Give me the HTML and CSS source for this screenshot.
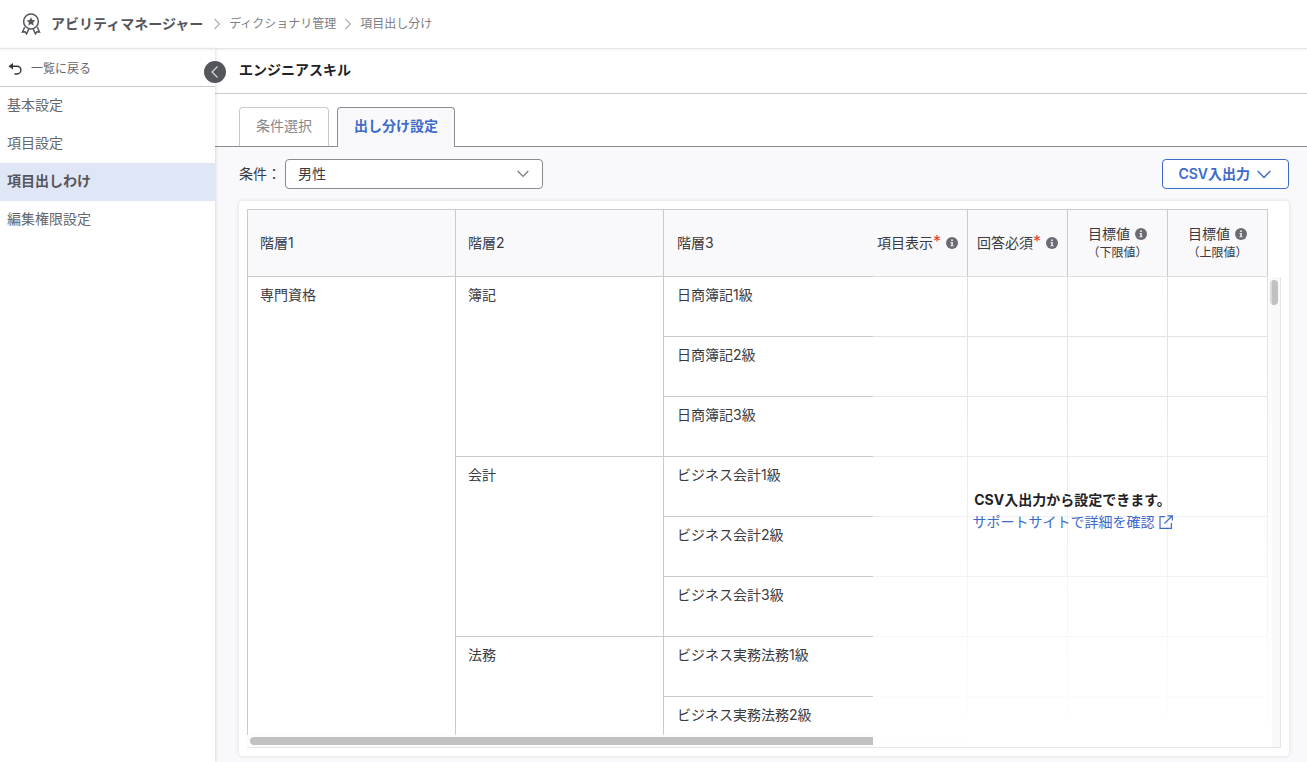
FILE: index.html
```html
<!DOCTYPE html>
<html lang="ja">
<head>
    <meta charset="UTF-8" />
    <meta name="viewport" content="width=device-width, initial-scale=1.0" />
    <title>項目出し分け | アビリティマネージャー</title>
    <link rel="stylesheet" href="styles.css">
</head>
<body>
    <svg class="sprite" aria-hidden="true">
        <symbol id="icon-info" viewBox="0 0 12 12">
            <circle cx="6" cy="6" r="6" fill="#6b6b73" />
            <path d="M5.1 2.4h1.8v1.5H5.1zM4.4 4.9h2.5v3.5h.8v.9H4.3v-.9h.9V5.8h-.8z" fill="#e8e8ea" />
        </symbol>
        <symbol id="icon-right" viewBox="0 0 8 12">
            <path d="M1.5 1l5 5-5 5" fill="none" stroke="#b0b0b4" stroke-width="1.2" />
        </symbol>
    </svg>

    <header class="header">
        <svg class="logo" width="20" height="22" viewBox="0 0 20 22" fill="none" stroke="#55555c" stroke-width="1.5">
            <circle cx="10" cy="8.5" r="7.4" />
            <path d="M10 4.3l1.3 2.7 3 .4-2.2 2.1.5 3L10 11.1l-2.6 1.4.5-3-2.2-2.1 3-.4z" fill="#55555c" stroke="none" />
            <path d="M3.6 14.2L1.5 19l2.6-.3 1.5 2.1 2.2-4.8M16.4 14.2l2.1 4.8-2.6-.3-1.5 2.1-2.2-4.8" />
        </svg>
        <nav class="breadcrumb">
            <a href="#" class="app-name">アビリティマネージャー</a>
            <svg width="8" height="12"><use href="#icon-right" /></svg>
            <a href="#">ディクショナリ管理</a>
            <svg width="8" height="12"><use href="#icon-right" /></svg>
            <span>項目出し分け</span>
        </nav>
    </header>

    <div class="layout">
        <aside class="sidebar">
            <a href="#" class="back">
                <svg width="14" height="14" viewBox="0 0 14 14">
                    <path d="M3 4.2h6a3.9 3.9 0 0 1 0 7.8H6.5" fill="none" stroke="#333338" stroke-width="1.4" />
                    <path d="M0.5 4.2L5 1v6.4z" fill="#333338" />
                </svg>
                一覧に戻る
            </a>
            <nav class="menu">
                <a href="#">基本設定</a>
                <a href="#">項目設定</a>
                <a href="#" class="active">項目出しわけ</a>
                <a href="#">編集権限設定</a>
            </nav>
            <button class="collapse" aria-label="メニューを閉じる">
                <svg width="22" height="22" viewBox="0 0 22 22">
                    <path d="M13.5 5.5L8 11l5.5 5.5" fill="none" stroke="#d8d8dc" stroke-width="1.2" />
                </svg>
            </button>
        </aside>

        <main class="main">
            <h1>エンジニアスキル</h1>
            <div class="tabs">
                <button class="tab">条件選択</button>
                <button class="tab active">出し分け設定</button>
            </div>

            <div class="toolbar">
                <label for="condition">条件：</label>
                <div class="select">
                    <select id="condition">
                        <option>男性</option>
                        <option>女性</option>
                    </select>
                    <svg width="12" height="8" viewBox="0 0 12 8">
                        <path d="M.7 1L6 6.5 11.3 1" fill="none" stroke="#77777d" stroke-width="1.2" />
                    </svg>
                </div>
                <button class="csv">
                    CSV入出力
                    <svg width="14" height="9" viewBox="0 0 14 9">
                        <path d="M.7 1L7 7.5 13.3 1" fill="none" stroke="#3c6acb" stroke-width="1.4" />
                    </svg>
                </button>
            </div>

            <div class="card">
                <div class="grid">
                    <div class="table-view">
                        <table>
                            <colgroup>
                                <col class="level">
                                <col class="level">
                                <col>
                                <col class="flag">
                                <col class="flag">
                                <col class="flag">
                                <col class="flag">
                            </colgroup>
                            <thead>
                                <tr>
                                    <th>階層1</th>
                                    <th>階層2</th>
                                    <th class="open">階層3</th>
                                    <th class="center"><div class="th-label">項目表示<span class="required">*</span><svg width="12" height="12"><use href="#icon-info" /></svg></div></th>
                                    <th class="center"><div class="th-label">回答必須<span class="required">*</span><svg width="12" height="12"><use href="#icon-info" /></svg></div></th>
                                    <th class="center"><div class="th-label">目標値<svg width="12" height="12"><use href="#icon-info" /></svg></div><small>（下限値）</small></th>
                                    <th class="center"><div class="th-label">目標値<svg width="12" height="12"><use href="#icon-info" /></svg></div><small>（上限値）</small></th>
                                </tr>
                            </thead>
                            <tbody>
                                <tr>
                                    <td rowspan="9">専門資格</td>
                                    <td rowspan="3">簿記</td>
                                    <td class="open">日商簿記1級</td>
                                    <td></td><td></td><td></td><td></td>
                                </tr>
                                <tr>
                                    <td class="open">日商簿記2級</td>
                                    <td></td><td></td><td></td><td></td>
                                </tr>
                                <tr>
                                    <td class="open">日商簿記3級</td>
                                    <td></td><td></td><td></td><td></td>
                                </tr>
                                <tr>
                                    <td rowspan="3">会計</td>
                                    <td class="open">ビジネス会計1級</td>
                                    <td></td><td></td><td></td><td></td>
                                </tr>
                                <tr>
                                    <td class="open">ビジネス会計2級</td>
                                    <td></td><td></td><td></td><td></td>
                                </tr>
                                <tr>
                                    <td class="open">ビジネス会計3級</td>
                                    <td></td><td></td><td></td><td></td>
                                </tr>
                                <tr>
                                    <td rowspan="3">法務</td>
                                    <td class="open">ビジネス実務法務1級</td>
                                    <td></td><td></td><td></td><td></td>
                                </tr>
                                <tr>
                                    <td class="open">ビジネス実務法務2級</td>
                                    <td></td><td></td><td></td><td></td>
                                </tr>
                                <tr>
                                    <td class="open"></td>
                                    <td></td><td></td><td></td><td></td>
                                </tr>
                            </tbody>
                        </table>
                    </div>
                    <div class="scroll-x"><div class="thumb"></div></div>
                    <div class="scroll-y"><div class="thumb"></div></div>
                    <div class="notice">
                        <strong>CSV入出力から設定できます。</strong>
                        <a href="#">サポートサイトで詳細を確認
                            <svg width="14" height="14" viewBox="0 0 14 14" fill="none" stroke="#3c6acb" stroke-width="1.2">
                                <path d="M6 1.6H1v11.8h11.4V8M8.5.8h4.8v4.8M13 1L5.5 8.5" />
                            </svg>
                        </a>
                    </div>
                </div>
            </div>
        </main>
    </div>
</body>
</html>
```

FILE: styles.css
```css
:root {
    --primary: #3c6acb;
    --text: #3a3a3f;
    --sub: #66666c;
    --line: #cacacd;
    --bg: #f9f9fc;
}

* {
    box-sizing: border-box;
    margin: 0;
    padding: 0;
}

body {
    font-family: Inter, "Noto Sans CJK JP", sans-serif;
    font-size: 14px;
    line-height: 20px;
    color: var(--text);
    background: #fff;
    height: 100vh;
    display: flex;
    flex-direction: column;
    overflow: hidden;
}

a {
    color: inherit;
    text-decoration: none;
}

button,
select {
    font: inherit;
    cursor: pointer;
}

svg {
    flex-shrink: 0;
}

.sprite {
    position: absolute;
    width: 0;
    height: 0;
}

/* header */
.header {
    display: flex;
    align-items: center;
    gap: 10px;
    height: 49px;
    padding: 0 21px;
    border-bottom: 1px solid #e6e6e8;
    box-shadow: 0 1px 2px rgba(0, 0, 0, 0.06);
    position: relative;
    z-index: 2;
}

.breadcrumb {
    display: flex;
    align-items: center;
    gap: 8px;
    font-size: 12px;
    color: #7c7c82;
}

.app-name {
    margin-right: 2px;
    font-size: 14px;
    font-weight: 700;
    color: #55555c;
}

.layout {
    display: flex;
    flex: 1;
    min-height: 0;
}

/* sidebar */
.sidebar {
    position: relative;
    z-index: 1;
    width: 215px;
    flex-shrink: 0;
    background: #fff;
    box-shadow: 1px 0 3px rgba(0, 0, 0, 0.12);
}

.back {
    display: flex;
    align-items: center;
    gap: 9px;
    height: 38px;
    padding: 2px 8px 0;
    border-bottom: 1px solid var(--line);
    font-size: 12px;
    color: var(--sub);
}

.menu a {
    display: flex;
    align-items: center;
    height: 38px;
    padding: 0 7px 2px;
    color: var(--sub);
}

.menu a.active {
    background: #dfe6f6;
    color: #55555c;
    font-weight: 700;
}

.collapse {
    position: absolute;
    top: 12px;
    right: -11px;
    width: 22px;
    height: 22px;
    border: none;
    border-radius: 50%;
    background: #55555c;
}

.collapse svg {
    display: block;
}

/* main */
.main {
    flex: 1;
    min-width: 0;
    display: flex;
    flex-direction: column;
    background: var(--bg);
}

h1 {
    height: 45px;
    padding: 0 24px;
    line-height: 42px;
    font-size: 14px;
    font-weight: 700;
    color: #222226;
    background: #fff;
    border-bottom: 1px solid var(--line);
}

.tabs {
    display: flex;
    gap: 8px;
    height: 53px;
    padding: 13px 24px 0;
    background: #fff;
    border-bottom: 1px solid #8a8a90;
}

.tab {
    height: 39px;
    padding: 0 16px 2px;
    border: 1px solid var(--line);
    border-bottom: none;
    border-radius: 4px 4px 0 0;
    background: #fff;
    color: #88888e;
}

.tab.active {
    height: 40px;
    padding-bottom: 3px;
    border-color: #8a8a90;
    background: var(--bg);
    color: var(--primary);
    font-weight: 700;
}

.toolbar {
    display: flex;
    align-items: center;
    gap: 4px;
    padding: 12px 18px 12px 24px;
}

.select {
    position: relative;
    width: 258px;
}

.select select {
    display: block;
    appearance: none;
    width: 100%;
    height: 30px;
    padding: 0 12px;
    border: 1px solid #8a8a90;
    border-radius: 4px;
    background: #fff;
    color: var(--text);
}

.select svg {
    position: absolute;
    top: 11px;
    right: 14px;
    pointer-events: none;
}

.csv {
    display: flex;
    align-items: center;
    gap: 7px;
    height: 30px;
    margin-left: auto;
    padding: 0 17px 0 15px;
    border: 1px solid var(--primary);
    border-radius: 4px;
    background: #fff;
    color: var(--primary);
    font-weight: 600;
}

.card {
    flex: 1;
    min-height: 0;
    display: flex;
    margin: 0 18px 6px 24px;
    padding: 8px;
    border-radius: 4px;
    background: #fff;
    box-shadow: 0 0 4px rgba(0, 0, 0, 0.12);
}

.grid {
    position: relative;
    flex: 1;
    min-width: 0;
    display: flex;
    flex-direction: column;
}

.table-view {
    flex: 1;
    min-height: 0;
    overflow: hidden;
}

table {
    table-layout: fixed;
    width: calc(100% - 13px);
    border-collapse: separate;
    border-spacing: 0;
    border: 1px solid var(--line);
    border-width: 1px 0 0 1px;
}

.level {
    width: 208px;
}

.flag {
    width: 100px;
}

th,
td {
    padding: 0 12px;
    border: 1px solid var(--line);
    border-width: 0 1px 1px 0;
    text-align: left;
    font-weight: 400;
}

th {
    height: 67px;
    background: var(--bg);
}

td {
    height: 60px;
    padding-top: 8px;
    vertical-align: top;
}

th.open,
td.open {
    border-right: none;
    padding-left: 13px;
}

th.center {
    padding: 0;
    text-align: center;
}

.th-label {
    display: flex;
    align-items: center;
    justify-content: center;
}

.th-label svg {
    margin-left: 5px;
}

.required {
    margin-bottom: 4px;
    font-size: 16px;
    color: #e0402f;
}

small {
    display: block;
    font-size: 12px;
    line-height: 18px;
}

.scroll-x {
    height: 13px;
    padding: 2px 3px;
    border-bottom: 1px solid #e6e6e8;
    background: #fcfcfc;
}

.scroll-x .thumb {
    width: 70%;
    height: 8px;
    border-radius: 4px;
    background: #c1c1c1;
}

.scroll-y {
    position: absolute;
    top: 68px;
    right: 0;
    bottom: 0;
    width: 13px;
    padding: 3px 2px;
    border: 1px solid #e6e6e8;
    border-width: 0 1px 1px 0;
    background: #f9f9f9;
}

.scroll-y .thumb {
    width: 8px;
    height: 25px;
    border-radius: 4px;
    background: #c1c1c1;
}

/* covers the input columns that can only be set from CSV */
.notice {
    position: absolute;
    top: 67px;
    right: 9px;
    bottom: 1px;
    width: 399px;
    padding-bottom: 2px;
    display: flex;
    flex-direction: column;
    align-items: center;
    justify-content: center;
    line-height: 22px;
    background: linear-gradient(rgba(255, 255, 255, 0.4), #fff);
}

.notice strong {
    font-weight: 700;
    color: #222226;
}

.notice a {
    display: flex;
    align-items: center;
    gap: 4px;
    color: var(--primary);
}
```
